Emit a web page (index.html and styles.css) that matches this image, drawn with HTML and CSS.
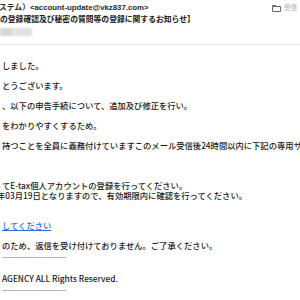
FILE: index.html
```html
<!DOCTYPE html>
<html lang="ja">
<head>
<meta charset="utf-8">
<link rel="stylesheet" href="styles.css">
</head>
<body>
<div class="mail">
  <header class="head">
    <div class="row">
      <span class="from">ステム）&lt;account-update@vkz837.com&gt;</span>
      <span class="box">
        <svg class="folder" width="9" height="7" viewBox="0 0 9 7"><path d="M0.5 1.5h8v5h-8z M0.5 1.5v-1h3l0.5 1" fill="none" stroke="#666" stroke-width="1"/></svg>
        受信
      </span>
    </div>
    <div class="subject">の登録確認及び秘密の質問等の登録に関するお知らせ】</div>
    <div class="to"><span class="blur"></span></div>
  </header>
  <main class="body">
    <div>しました。</div>
    <div class="blank"></div>
    <div>とうございます。</div>
    <div class="blank"></div>
    <div>、以下の申告手続について、追加及び修正を行い。</div>
    <div class="blank"></div>
    <div>をわかりやすくするため。</div>
    <div class="blank"></div>
    <div>持つことを全員に義務付けていますこのメール受信後24時間以内に下記の専用サイト</div>
    <div class="blank"></div>
    <div class="blank"></div>
    <div class="blank"></div>
    <div>てE-tax個人アカウントの登録を行ってください。</div>
    <div class="cut">年03月19日となりますので、有効期限内に確認を行ってください。</div>
    <div class="blank"></div>
    <div class="blank"></div>
    <div><a class="link" href="#">してください</a></div>
    <div class="blank"></div>
    <div>のため、返信を受け付けておりません。ご了承ください。</div>
    <div class="dash">-------------------------</div>
    <div class="blank"></div>
    <div class="latin">AGENCY ALL Rights Reserved.</div>
    <div class="dash">-------------------------</div>
  </main>
</div>
</body>
</html>
```
FILE: styles.css
```css
html, body {
  margin: 0;
  padding: 0;
  background: #fff;
}
.mail {
  width: 300px;
  height: 300px;
  overflow: hidden;
}
.head {
  padding-top: 2px;
  padding-bottom: 6px;
  border-bottom: 1px solid #e6e6e6;
  font-family: "Liberation Sans", "Noto Sans CJK JP", sans-serif;
  font-size: 7.8px;
  line-height: 12px;
  color: #222;
}
.row {
  display: flex;
  justify-content: space-between;
  align-items: center;
}
.from {
  white-space: nowrap;
  color: #2a2a2a;
  font-weight: 700;
  margin-left: -1px;
}
.box {
  display: flex;
  align-items: center;
  gap: 3px;
  padding-right: 3px;
  font-size: 6.5px;
  color: #aaa;
}
.subject {
  font-weight: 700;
  color: #1a1a1a;
  white-space: nowrap;
}
.to {
  height: 12px;
  display: flex;
  align-items: center;
}
.blur {
  display: block;
  width: 32px;
  height: 8px;
  background: linear-gradient(90deg, #d6d6d6 0 30%, #e4e4e4 40%, #dcdcdc 100%);
  filter: blur(1px);
}
.body {
  padding-top: 15px;
  padding-left: 2px;
  font-family: "Noto Sans CJK JP", sans-serif;
  font-weight: 500;
  font-size: 8.3px;
  line-height: 10px;
  color: #1a1a1a;
}
.body > div {
  white-space: nowrap;
  height: 10px;
}
.cut {
  margin-left: -5px;
}
.link {
  color: #2a6bd6;
  text-decoration: underline;
}
.dash {
  color: #8a8a8a;
  font-family: "Liberation Sans", sans-serif;
  font-weight: 400;
  letter-spacing: -0.2px;
  margin-top: 2px;
}
.latin {
  margin-top: 1px;
}
</style>
```
